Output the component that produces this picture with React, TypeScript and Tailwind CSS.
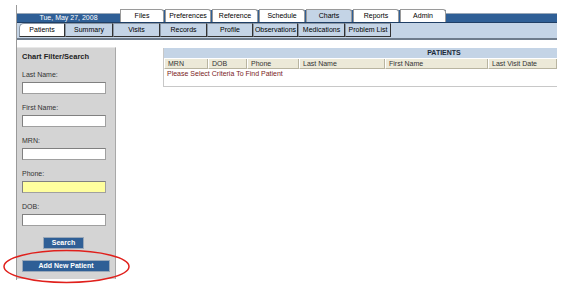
import React from "react";

const topTabs: { label: string; w: number; active?: boolean }[] = [
  { label: "Files", w: 44 },
  { label: "Preferences", w: 46 },
  { label: "Reference", w: 46 },
  { label: "Schedule", w: 46 },
  { label: "Charts", w: 46, active: true },
  { label: "Reports", w: 46 },
  { label: "Admin", w: 46 },
];

const subTabs: { label: string; w: number; active?: boolean }[] = [
  { label: "Patients", w: 46, active: true },
  { label: "Summary", w: 48 },
  { label: "Visits", w: 47 },
  { label: "Records", w: 47 },
  { label: "Profile", w: 46 },
  { label: "Observations", w: 45 },
  { label: "Medications", w: 47 },
  { label: "Problem List", w: 46 },
];

const cols: { label: string; w: number }[] = [
  { label: "MRN", w: 44 },
  { label: "DOB", w: 39 },
  { label: "Phone", w: 52 },
  { label: "Last Name", w: 86 },
  { label: "First Name", w: 103 },
  { label: "Last Visit Date", w: 69 },
];

const fields: { label: string; yellow?: boolean }[] = [
  { label: "Last Name:" },
  { label: "First Name:" },
  { label: "MRN:" },
  { label: "Phone:", yellow: true },
  { label: "DOB:" },
];

export default function App() {
  return (
    <div
      className="relative w-[566px] h-[298px] bg-white overflow-hidden pt-[5px]"
      style={{ fontFamily: '"Liberation Sans", Arial, sans-serif' }}
    >
      <div className="ml-[16px] w-[541px] h-[275px] border-l border-[#9a9a9a]">
        {/* top row */}
        <div className="flex items-end h-[18px]">
          <div className="w-[103px] h-[10px] bg-[#2f5f96] border-t border-[#9aa8b8] border-b border-b-[#1f3f66] text-white text-[7px] leading-[8px] text-center">
            Tue, May 27, 2008
          </div>
          <div className="flex items-end h-[13px] bg-[#2f5f96] border-b border-[#1f3f66]">
            {topTabs.map((t, i) => (
              <div
                key={t.label}
                style={{ width: t.w }}
                className={`h-[13px] ${i > 0 ? "ml-[1px]" : ""} border border-b-0 border-[#9a9a9a] rounded-tr-[3px] text-[7px] leading-[12px] text-center text-black ${
                  t.active ? "bg-[#c4d4e6]" : "bg-white"
                }`}
              >
                {t.label}
              </div>
            ))}
          </div>
          <div className="flex-1 h-[10px] bg-[#2f5f96] border-t border-[#9aa8b8] border-b border-b-[#1f3f66]" />
        </div>
        {/* sub tabs row */}
        <div className="flex items-end h-[17px] bg-[#c4d4e6] border-b-2 border-[#6e7c8c] pl-[2px] pb-[1px]">
          {subTabs.map((t) => (
            <div
              key={t.label}
              style={{ width: t.w }}
              className={`h-[14px] border-l border-t border-[#8a96a4] border-r border-r-[#333] border-b border-b-[#333] text-[7px] leading-[12px] text-center text-black ${
                t.active ? "bg-white rounded-tl-[5px]" : "bg-[#c4d4e6]"
              }`}
            >
              {t.label}
            </div>
          ))}
        </div>
        {/* content */}
        <div className="flex items-start pt-[7px]">
          <div className="w-[100px] h-[232px] bg-[#d4d4d4] border-t border-[#e8e8e8] border-r border-r-[#a8a8a8] pl-[5px] pt-[4px]">
            <div className="text-[7.5px] leading-[10px] font-bold text-[#222]">Chart Filter/Search</div>
            <div className="h-[8px]" />
            {fields.map((f) => (
              <div key={f.label} className="h-[33px]">
                <div className="text-[7px] leading-[10px] text-[#333]">{f.label}</div>
                <div
                  className={`mt-[2px] w-[84px] h-[12px] border border-[#a0a0a0] border-t-[#808080] border-l-[#808080] ${
                    f.yellow ? "bg-[#ffff9e]" : "bg-white"
                  }`}
                />
              </div>
            ))}
            <div className="flex justify-center pr-[10px] mt-[2px]">
              <div className="w-[41px] h-[12px] bg-[#2f5f96] border border-[#9aa8b8] text-white font-bold text-[7px] leading-[10px] text-center">
                Search
              </div>
            </div>
            <div className="mt-[11px] w-[88px] h-[12px] bg-[#2f5f96] border border-[#9aa8b8] text-white font-bold text-[7px] leading-[10px] text-center">
              Add New Patient
            </div>
          </div>
          <div className="ml-[47px] mt-[1px] w-[394px] border-l border-b border-[#c8c8c8] h-[39px]">
            <div className="h-[10px] bg-[#c4d4e6] pl-[167px] text-center text-[7px] leading-[10px] font-bold text-[#1a2a3a]">
              PATIENTS
            </div>
            <div className="flex mt-[1px]">
              {cols.map((c) => (
                <div
                  key={c.label}
                  style={{ width: c.w }}
                  className="h-[10px] bg-[#ece9d8] border-r border-b border-[#b8b4a0] border-l border-l-white pl-[3px] text-[7px] leading-[9px] text-[#333]"
                >
                  {c.label}
                </div>
              ))}
            </div>
            <div className="pl-[3px] text-[7px] leading-[10px] text-[#7a1c1c]">
              Please Select Criteria To Find Patient
            </div>
          </div>
        </div>
      </div>
      <svg className="absolute left-0 top-0" width="566" height="298">
        <ellipse cx="66.5" cy="266.5" rx="62.5" ry="16" fill="none" stroke="#e0201c" strokeWidth="1.5" />
      </svg>
    </div>
  );
}
